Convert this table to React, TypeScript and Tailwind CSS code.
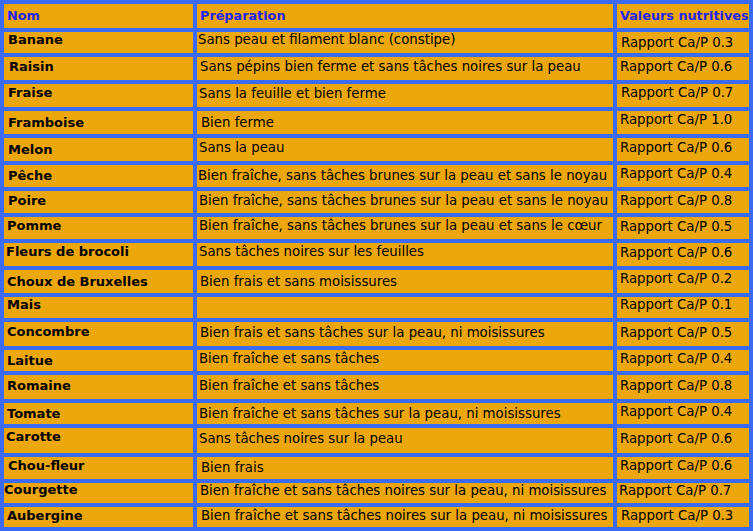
import React from 'react';

interface Row {
  nom: string;
  prep: string;
  ratio: string;
  h: string;
  // per-cell nudges: the source table is hand-made and not quite regular
  c1: string;
  c2: string;
  c3: string;
}

const rows: Row[] = [
  { nom: 'Banane', prep: 'Sans peau et filament blanc (constipe)', ratio: '0.3', h: 'h-[21px]', c1: 'pl-[4px] pb-[5px]', c2: 'pl-[1px] pb-[5px]', c3: 'pl-[4px] pb-0' },
  { nom: 'Raisin', prep: 'Sans pépins bien ferme et sans tâches noires sur la peau', ratio: '0.6', h: 'h-[23px]', c1: 'pl-[5px] pb-[3px]', c2: 'pl-[3px] pb-[3px]', c3: 'pl-[3px] pb-[3px]' },
  { nom: 'Fraise', prep: 'Sans la feuille et bien ferme', ratio: '0.7', h: 'h-[23px]', c1: 'pl-[4px] pb-[5px]', c2: 'pl-[2px] pb-[3px]', c3: 'pl-[4px] pb-[5px]' },
  { nom: 'Framboise', prep: 'Bien ferme', ratio: '1.0', h: 'h-[23px]', c1: 'pl-[4px] pb-0', c2: 'pl-[4px] pb-0', c3: 'pl-[3px] pb-[5px]' },
  { nom: 'Melon', prep: 'Sans la peau', ratio: '0.6', h: 'h-[23px]', c1: 'pl-[4px] pb-0', c2: 'pl-[2px] pb-[3px]', c3: 'pl-[3px] pb-[3px]' },
  { nom: 'Pêche', prep: 'Bien fraîche, sans tâches brunes sur la peau et sans le noyau', ratio: '0.4', h: 'h-[22px]', c1: 'pl-[4px] pb-0', c2: 'pl-[1px] pb-0', c3: 'pl-[3px] pb-[4px]' },
  { nom: 'Poire', prep: 'Bien fraîche, sans tâches brunes sur la peau et sans le noyau', ratio: '0.8', h: 'h-[22px]', c1: 'pl-[4px] pb-[2px]', c2: 'pl-[2px] pb-[2px]', c3: 'pl-[3px] pb-[2px]' },
  { nom: 'Pomme', prep: 'Bien fraîche, sans tâches brunes sur la peau et sans le cœur', ratio: '0.5', h: 'h-[22px]', c1: 'pl-[3px] pb-[4px]', c2: 'pl-[2px] pb-[4px]', c3: 'pl-[3px] pb-[2px]' },
  { nom: 'Fleurs de brocoli', prep: 'Sans tâches noires sur les feuilles', ratio: '0.6', h: 'h-[23px]', c1: 'pl-[2px] pb-[5px]', c2: 'pl-[2px] pb-[5px]', c3: 'pl-[3px] pb-[3px]' },
  { nom: 'Choux de Bruxelles', prep: 'Bien frais et sans moisissures', ratio: '0.2', h: 'h-[23px]', c1: 'pl-[3px] pb-0', c2: 'pl-[3px] pb-0', c3: 'pl-[3px] pb-[5px]' },
  { nom: 'Mais', prep: '', ratio: '0.1', h: 'h-[21px]', c1: 'pl-[3px] pb-[5px]', c2: 'pl-[3px] pb-0', c3: 'pl-[3px] pb-[5px]' },
  { nom: 'Concombre', prep: 'Bien frais et sans tâches sur la peau, ni moisissures', ratio: '0.5', h: 'h-[24px]', c1: 'pl-[3px] pb-[4px]', c2: 'pl-[3px] pb-[2px]', c3: 'pl-[3px] pb-[2px]' },
  { nom: 'Laitue', prep: 'Bien fraîche et sans tâches', ratio: '0.4', h: 'h-[21px]', c1: 'pl-[3px] pb-0', c2: 'pl-[2px] pb-[3px]', c3: 'pl-[3px] pb-[3px]' },
  { nom: 'Romaine', prep: 'Bien fraîche et sans tâches', ratio: '0.8', h: 'h-[24px]', c1: 'pl-[3px] pb-[2px]', c2: 'pl-[2px] pb-[2px]', c3: 'pl-[3px] pb-[2px]' },
  { nom: 'Tomate', prep: 'Bien fraîche et sans tâches sur la peau, ni moisissures', ratio: '0.4', h: 'h-[21px]', c1: 'pl-[3px] pb-0', c2: 'pl-[2px] pb-0', c3: 'pl-[3px] pb-[3px]' },
  { nom: 'Carotte', prep: 'Sans tâches noires sur la peau', ratio: '0.6', h: 'h-[25px]', c1: 'pl-[2px] pb-[7px]', c2: 'pl-[2px] pb-[3px]', c3: 'pl-[3px] pb-[3px]' },
  { nom: 'Chou-fleur', prep: 'Bien frais', ratio: '0.6', h: 'h-[22px]', c1: 'pl-[4px] pb-[4px]', c2: 'pl-[4px] pb-0', c3: 'pl-[3px] pb-[4px]' },
  { nom: 'Courgette', prep: 'Bien fraîche et sans tâches noires sur la peau, ni moisissures', ratio: '0.7', h: 'h-[20px]', c1: 'pl-0 pb-[6px]', c2: 'pl-[3px] pb-[4px]', c3: 'pl-[2px] pb-[4px]' },
  { nom: 'Aubergine', prep: 'Bien fraîche et sans tâches noires sur la peau, ni moisissures', ratio: '0.3', h: 'h-[20px]', c1: 'pl-[3px] pb-[2px]', c2: 'pl-[4px] pb-[2px]', c3: 'pl-[4px] pb-[2px]' },
];

const cell = 'bg-[#eca70c] flex items-center whitespace-nowrap overflow-hidden';
const cols = 'grid grid-cols-[189px_416px_132px] gap-x-[4px]';

export default function App() {
  return (
    <div
      className="w-[753px] h-[531px] bg-[#3b6bf2] p-[4px] flex flex-col gap-[4px] text-[13.3px] text-black"
      style={{ fontFamily: '"DejaVu Sans", Verdana, sans-serif' }}
    >
      <div className={`${cols} h-[24px] font-bold text-[12.8px] text-[#2424f0]`}>
        <div className={`${cell} pl-[3px]`}>Nom</div>
        <div className={`${cell} pl-[3px]`}>Préparation</div>
        <div className={`${cell} pl-[3px]`}>Valeurs nutritives</div>
      </div>
      {rows.map((r) => (
        <div key={r.nom} className={`${cols} ${r.h}`}>
          <div className={`${cell} ${r.c1} font-bold text-[13px]`}>{r.nom}</div>
          <div className={`${cell} ${r.c2}`}>{r.prep}</div>
          <div className={`${cell} ${r.c3}`}>Rapport Ca/P {r.ratio}</div>
        </div>
      ))}
    </div>
  );
}
